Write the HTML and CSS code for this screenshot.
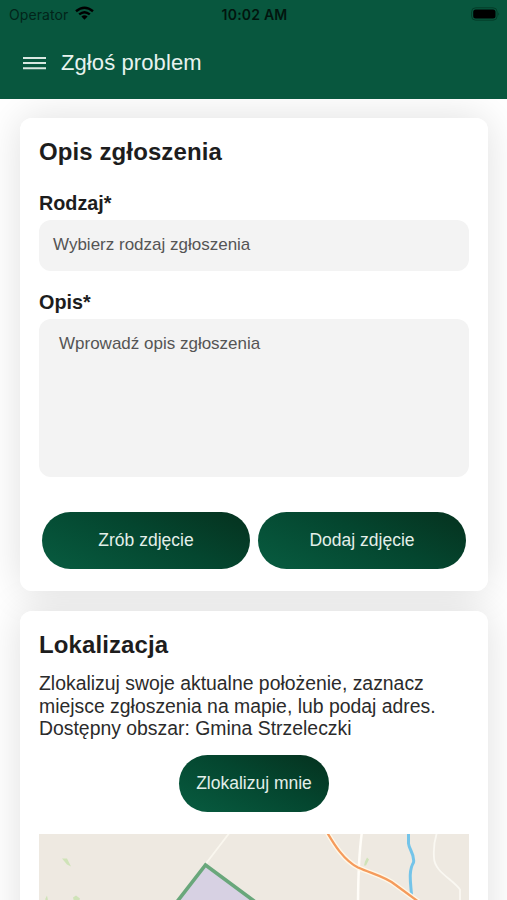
FILE: index.html
```html
<!DOCTYPE html>
<html lang="pl">
<head>
<meta charset="utf-8">
<title>Zgłoś problem</title>
<link rel="stylesheet" href="styles.css">
</head>
<body>
<header class="header">
  <div class="status">
    <div class="carrier"><span>Operator</span>
      <svg width="19" height="14" viewBox="0 0 19 14" fill="none" stroke="#000" stroke-width="2.5"><path d="M1 5.2Q9.5-1.8 18 5.2M4.2 8.4Q9.5 4 14.8 8.4"/><path d="M6.4 10.6Q9.5 8 12.6 10.6L9.5 13.8Z" fill="#000" stroke="none"/></svg>
    </div>
    <div class="clock">10:02 AM</div>
    <svg class="battery" width="29" height="14" viewBox="0 0 29 14"><rect x=".6" y=".8" width="25.5" height="12.4" rx="4" fill="none" stroke="#043d29" stroke-width="1"/><rect x="2.2" y="2.5" width="22.3" height="9" rx="2.5"/><path d="M27.2 5.2Q29 7 27.2 8.8Z" fill="#043d29"/></svg>
  </div>
  <div class="titlebar">
    <svg width="23" height="14" viewBox="0 0 23 14" stroke="#d9e8e1" stroke-width="2"><path d="M0 2H23M0 7H23M0 12.3H23"/></svg>
    <h1 class="title">Zgłoś problem</h1>
  </div>
</header>
<main class="page">
  <section class="card card-form">
    <h2 class="heading">Opis zgłoszenia</h2>
    <div class="label">Rodzaj*</div>
    <div class="field">Wybierz rodzaj zgłoszenia</div>
    <div class="label label-desc">Opis*</div>
    <div class="field area">Wprowadź opis zgłoszenia</div>
    <div class="actions">
      <button class="btn">Zrób zdjęcie</button>
      <button class="btn">Dodaj zdjęcie</button>
    </div>
  </section>
  <section class="card card-location">
    <h2 class="heading">Lokalizacja</h2>
    <p class="text"><span class="line-a">Zlokalizuj swoje aktualne położenie, zaznacz</span><br><span class="line-b">miejsce zgłoszenia na mapie, lub podaj adres.</span><br><span class="line-c">Dostępny obszar: Gmina Strzeleczki</span></p>
    <button class="btn locate">Zlokalizuj mnie</button>
    <svg class="map" width="430" height="100" viewBox="39 834.5 430 100">
      <rect x="39" y="834" width="430" height="101" fill="#eee9e1"/>
      <g fill="#cfe3b8"><path d="M62 859l5 0 4 8-4-2z"/><path d="M73 898l3-2 4 3-1 3h-5zM45 900l2-4 1 5z"/><path d="M367 858l2 2-3 6-2 0 1-4z"/></g>
      <g fill="none" stroke-linecap="round" stroke-linejoin="round">
        <path d="M232 830L206 864" stroke="#faf7ef" stroke-width="1.8"/>
        <path d="M362 832Q358 860 358 910" stroke="#fffdf8" stroke-width="2.5"/>
        <path d="M437 833Q433 845 434 858C434 872 453 880 460 890V910" stroke="#faf8f2" stroke-width="1.8"/>
        <path d="M408.500 832V844C409 850 415 855 413.500 863C408 872 411 885 411.500 896" stroke="#74c4e9" stroke-width="3"/>
        <path id="road" d="M326 831C334 845 344 861 358 868C371 874 385 877 395 885L425 907" stroke="#fff8e8" stroke-width="5"/>
        <path d="M326 831C334 845 344 861 358 868C371 874 385 877 395 885L425 907" stroke="#f59b5c" stroke-width="2.3"/>
      </g>
      <path d="M164 919L205.500 865.500L275 917" fill="#d7d1e3" stroke="#69a77b" stroke-width="3.6"/>
    </svg>
  </section>
</main>
</body>
</html>
```
FILE: styles.css
```css
* { box-sizing: border-box; }
html, body { height: 100%; overflow: hidden; }
body {
  margin: 0;
  display: flex;
  flex-direction: column;
  background: #fff;
  color: #1d1d1d;
  font-family: "Liberation Sans", Arial, sans-serif;
}
.header { flex: none; height: 98.5px; background: #08573e; z-index: 1; }
.status {
  height: 28px;
  padding: 0 7px 0 9px;
  display: grid;
  grid-template-columns: 1fr auto 1fr;
  align-items: center;
  color: #000;
  font-family: Inter, sans-serif;
  font-size: 14px;
}
.carrier { display: flex; align-items: center; gap: 7px; color: #02251a; letter-spacing: .1px; }
.carrier svg { margin-top: -3px; }
.clock { font-weight: 600; color: #02150e; letter-spacing: .2px; }
.battery { justify-self: end; margin-top: -1px; }
.titlebar { height: 70px; padding: 0 23px; display: flex; align-items: center; gap: 15px; }
.title { margin: 0; color: #e8f3ee; font-size: 22px; font-weight: 400; letter-spacing: .1px; }
.page { flex: none; padding: 19.500px 19px 0 20px; isolation: isolate; }
.card { position: relative; height: 473px; padding: 0 19px; background: #fff; border-radius: 12px; }
.card::before {
  content: "";
  position: absolute;
  inset: 0;
  z-index: -1;
  border-radius: 12px;
  box-shadow: 0 0 40px rgba(0, 0, 0, .13);
}
.card-location { margin-top: 20px; }
.heading { margin: 0; padding-top: 19px; font-size: 24px; line-height: 30px; letter-spacing: .1px; }
.label { margin-top: 24px; font-size: 19.800px; line-height: 24px; font-weight: 700; }
.field {
  margin-top: 5px;
  height: 51px;
  padding: 0 14px;
  border-radius: 12px;
  background: #f3f3f3;
  color: #555;
  font-size: 17px;
  line-height: 50px;
}
.label-desc { margin-top: 19px; }
.area { height: 158px; padding: 0 20px; }
.actions { display: grid; grid-template-columns: 1fr 1fr; gap: 8px; padding: 35px 3px 0; }
.btn {
  height: 57px;
  padding: 0;
  border: 0;
  border-radius: 29px;
  background: linear-gradient(25deg, #07583d 10%, #04462f 55%, #053622 90%);
  color: #e3efe9;
  font-family: inherit;
  font-size: 17.500px;
}
.text { margin: 12px 0 0; color: #2b2b2b; font-size: 19.400px; line-height: 22.700px; white-space: nowrap; }
.locate { display: block; width: 150px; margin: 15px auto 0; }
.map { display: block; margin-top: 22px; }
```
